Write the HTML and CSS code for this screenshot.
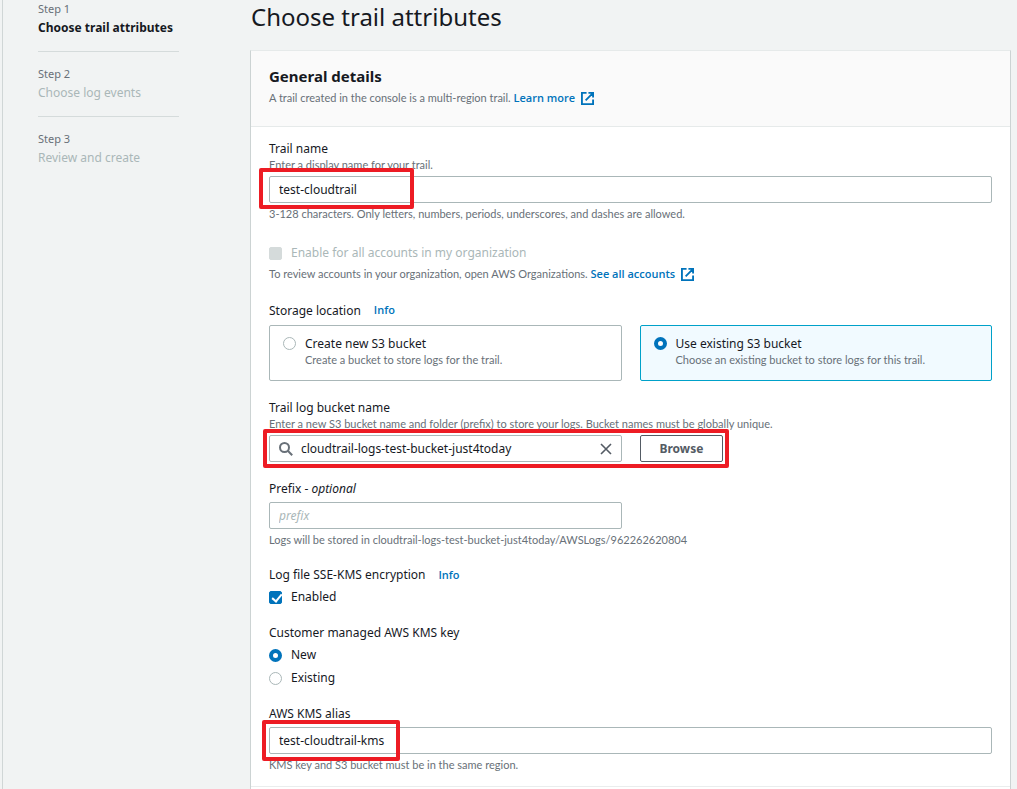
FILE: index.html
```html
<!DOCTYPE html>
<html lang="en">
<head>
<meta charset="utf-8">
<title>Choose trail attributes</title>
<link rel="stylesheet" href="styles.css">
</head>
<body>
<div class="wizard">
  <nav class="steps" aria-label="Steps">
    <ol class="step-list">
      <li class="step"><div class="step-number">Step 1</div><div class="step-title current">Choose trail attributes</div></li>
      <li class="step"><div class="step-number">Step 2</div><div class="step-title">Choose log events</div></li>
      <li class="step"><div class="step-number">Step 3</div><div class="step-title">Review and create</div></li>
    </ol>
  </nav>
  <main class="content">
    <h1 class="page-title">Choose trail attributes</h1>
    <section class="panel">
      <header class="panel-header">
        <h2 class="panel-title">General details</h2>
        <p class="note note-icon">A trail created in the console is a multi-region trail. <a class="link" href="#">Learn more<svg class="external" viewBox="0 0 14 14" aria-hidden="true"><path d="M6 1H1v12h12V8M8 1h5v5M13 1 5 9"/></svg></a></p>
      </header>
      <form class="panel-body">
        <div class="field">
          <label class="label" for="trail-name">Trail name</label>
          <p class="note">Enter a display name for your trail.</p>
          <div class="control">
            <input class="input" id="trail-name" type="text" value="test-cloudtrail">
            <span class="mark mark-name"></span>
          </div>
          <p class="note hint">3-128 characters. Only letters, numbers, periods, underscores, and dashes are allowed.</p>
        </div>

        <div class="field organization">
          <label class="choice disabled"><input class="tick" type="checkbox" disabled>Enable for all accounts in my organization</label>
          <p class="note note-icon">To review accounts in your organization, open AWS Organizations. <a class="link" href="#">See all accounts<svg class="external" viewBox="0 0 14 14" aria-hidden="true"><path d="M6 1H1v12h12V8M8 1h5v5M13 1 5 9"/></svg></a></p>
        </div>

        <div class="field" role="radiogroup" aria-labelledby="storage-label">
          <div class="label-row storage-row"><span class="label" id="storage-label">Storage location</span><a class="link" href="#">Info</a></div>
          <div class="columns control">
            <label class="tile"><input class="radio" type="radio" name="storage"><span><span class="tile-title">Create new S3 bucket</span><span class="tile-note">Create a bucket to store logs for the trail.</span></span></label>
            <label class="tile selected"><input class="radio" type="radio" name="storage" checked><span><span class="tile-title">Use existing S3 bucket</span><span class="tile-note">Choose an existing bucket to store logs for this trail.</span></span></label>
          </div>
        </div>

        <div class="field">
          <label class="label" for="bucket">Trail log bucket name</label>
          <p class="note">Enter a new S3 bucket name and folder (prefix) to store your logs. Bucket names must be globally unique.</p>
          <div class="columns control">
            <div class="search">
              <svg class="search-icon" viewBox="0 0 14 14" aria-hidden="true"><circle cx="5.5" cy="5.5" r="4.5"/><path d="m8.8 8.8 4.4 4.4"/></svg>
              <input class="search-input" id="bucket" type="text" value="cloudtrail-logs-test-bucket-just4today">
              <button class="clear" type="button" aria-label="Clear"><svg class="clear-icon" viewBox="0 0 12 12" aria-hidden="true"><path d="m1 1 10 10M11 1 1 11"/></svg></button>
            </div>
            <div class="browse-cell"><button class="browse" type="button">Browse</button></div>
            <span class="mark mark-bucket"></span>
          </div>
        </div>

        <div class="field">
          <label class="label" for="prefix">Prefix - <i>optional</i></label>
          <div class="columns control"><input class="input" id="prefix" type="text" placeholder="prefix"></div>
          <p class="note hint">Logs will be stored in cloudtrail-logs-test-bucket-just4today/AWSLogs/962262620804</p>
        </div>

        <div class="field">
          <div class="label-row"><span class="label">Log file SSE-KMS encryption</span><a class="link" href="#">Info</a></div>
          <label class="choice control"><input class="tick" type="checkbox" checked>Enabled</label>
        </div>

        <div class="field" role="radiogroup" aria-labelledby="key-label">
          <div class="label" id="key-label">Customer managed AWS KMS key</div>
          <label class="choice control"><input class="radio" type="radio" name="key" checked>New</label>
          <label class="choice option"><input class="radio" type="radio" name="key">Existing</label>
        </div>

        <div class="field">
          <label class="label" for="alias">AWS KMS alias</label>
          <div class="control">
            <input class="input" id="alias" type="text" value="test-cloudtrail-kms">
            <span class="mark mark-alias"></span>
          </div>
          <p class="note hint">KMS key and S3 bucket must be in the same region.</p>
        </div>
      </form>
      <div class="panel-footer"></div>
    </section>
  </main>
</div>
</body>
</html>
```
FILE: styles.css
```css
* { box-sizing: border-box; }

body {
  margin: 0;
  background: #f1f3f3;
  color: #16191f;
  font: 12px/18px "Noto Sans", sans-serif;
}

h1, h2, p, ol { margin: 0; padding: 0; font-weight: 400; }

.wizard {
  display: flex;
  gap: 71px;
  min-height: 100vh;
  margin-left: 2px;
  padding: 0 6px 0 35px;
  border-left: 1px solid #d0d6d6;
}

.steps { flex: 0 0 141px; }
.step-list { list-style: none; }
.step { padding-bottom: 14px; }
.step + .step { padding-top: 13px; border-top: 1px solid #d5dbdb; }
.step-number { color: #687078; font-size: 11px; }
.step-title { padding-top: 1px; color: #aab7b8; white-space: nowrap; }
.step-title.current { color: #16191f; font-weight: 700; }

.content { flex: 1; min-width: 0; }
.page-title { padding: 1px 0 17px 1px; font-size: 24px; line-height: 32px; }

.panel { background: #fff; border: 1px solid #ccd3d3; border-top-color: #e6eaea; border-bottom: 0; }
.panel-header { padding: 15px 18px 19px; background: #fafafa; border-bottom: 1px solid #e6eaea; }
.panel-title { margin-bottom: 3px; font-size: 15px; line-height: 20px; font-weight: 700; }
.panel-body { padding: 12px 18px 13px; }
.panel-footer { height: 4px; border-top: 1px solid #eaeded; }

.field + .field { margin-top: 17px; }
.field + .organization { margin-top: 22px; }
.label { display: block; padding-top: 1px; }
.label-row { display: flex; align-items: center; gap: 13px; }
.storage-row { min-height: 20px; }
.note { color: #687078; font: 11px/14px Lato, sans-serif; }
.note-icon { line-height: 18px; }
.hint { margin-top: 3px; line-height: 16px; }
.organization .note { margin-top: 3px; }
.control { position: relative; margin-top: 4px; }
.storage-row + .control { margin-top: 5px; }
.option { margin-top: 5px; }

.link { color: #0073bb; font: 600 11px/18px "Open Sans", sans-serif; text-decoration: none; }
.external {
  width: 13px;
  height: 13px;
  margin-left: 6px;
  vertical-align: -3px;
  fill: none;
  stroke: #0073bb;
  stroke-width: 2;
}

.input, .search {
  display: block;
  width: 100%;
  height: 27px;
  padding: 0 9px;
  background: #fff;
  border: 1px solid #aab7b8;
  border-radius: 2px;
  color: #16191f;
  font: inherit;
}
.input::placeholder { color: #aab7b8; font-style: italic; opacity: 1; }

.columns { display: grid; grid-template-columns: 1fr 1fr; gap: 18px; }

.choice { display: flex; align-items: center; gap: 9px; }
.disabled { color: #aab7b8; }

.tick, .radio {
  flex: none;
  width: 13px;
  height: 13px;
  margin: 0;
  appearance: none;
  background: #fff;
  border: 1px solid #aab7b8;
}
.tick { border-radius: 2px; }
.tick:disabled { background: #d5dbdb; border-color: #d5dbdb; }
.tick:checked { position: relative; background: #0073bb; border-color: #0073bb; }
.tick:checked::after {
  content: "";
  position: absolute;
  left: 4px;
  top: 0;
  width: 4px;
  height: 8px;
  border: solid #fff;
  border-width: 0 2px 2px 0;
  transform: rotate(40deg);
}
.radio { border-radius: 50%; }
.radio:checked { border: 4px solid #0073bb; }

.tile {
  display: flex;
  gap: 9px;
  min-height: 56px;
  padding: 9px 13px;
  border: 1px solid #aab7b8;
  border-radius: 2px;
}
.tile .radio { margin-top: 2px; }
.tile.selected { background: #f1faff; border-color: #00a1c9; }
.tile-title, .tile-note { display: block; }
.tile-note { color: #687078; font: 11px/14px Lato, sans-serif; }

.search { display: flex; align-items: center; gap: 8px; }
.search-icon { flex: none; width: 14px; height: 14px; fill: none; stroke: #687078; stroke-width: 2; }
.search-input {
  flex: 1;
  min-width: 0;
  padding: 0;
  border: 0;
  background: none;
  color: #16191f;
  font: inherit;
}
.clear { display: flex; padding: 0; border: 0; background: none; }
.clear-icon { width: 12px; height: 12px; fill: none; stroke: #545b64; stroke-width: 1.6; }

.browse-cell { display: flex; }
.browse {
  height: 27px;
  padding: 0 19px;
  background: #fff;
  border: 1px solid #545b64;
  border-radius: 2px;
  color: #545b64;
  font: inherit;
  font-weight: 700;
}

.mark { position: absolute; border: 4px solid #ed1c24; border-radius: 2px; pointer-events: none; }
.mark-name { left: -10px; top: -8px; width: 155px; height: 41px; }
.mark-bucket { left: -6px; top: -6px; width: calc(50% + 104px); height: 39px; }
.mark-alias { left: -7px; top: -7px; width: 138px; height: 41px; }
```
